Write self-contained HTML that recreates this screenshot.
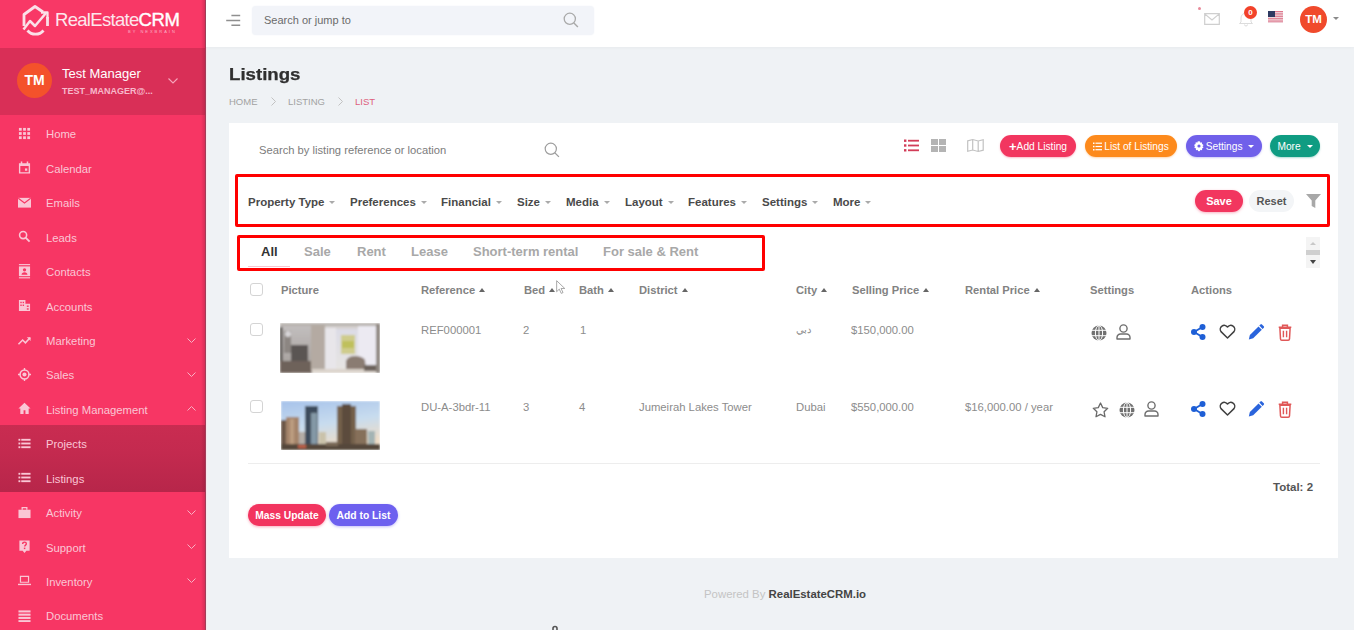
<!DOCTYPE html>
<html><head><meta charset="utf-8">
<style>
*{box-sizing:border-box;margin:0;padding:0}
html,body{width:1354px;height:630px;overflow:hidden;font-family:"Liberation Sans",sans-serif;background:#eff2f5;position:relative}
.a{position:absolute;white-space:nowrap}
svg{position:absolute;overflow:visible}
#sb{position:absolute;left:0;top:0;width:206px;height:630px;background:#f73664;border-right:1px solid #a0405a;box-shadow:1px 0 0 #fbe6ec}
#sb:after{content:"";position:absolute;left:201px;top:0;width:4px;height:630px;background:linear-gradient(90deg,rgba(120,20,50,0),rgba(120,20,50,.25))}
#sb .logo{position:absolute;left:0;top:0;width:205px;height:48px;background:#f83866}
#sb .user{position:absolute;left:0;top:48px;width:205px;height:67px;background:#d92f57}
#sb .sub{position:absolute;left:0;top:425px;width:205px;height:67px;background:linear-gradient(#c92c51,#c42a4f 40%,#b7264a)}
.mi{position:absolute;left:0;width:205px;height:20px;color:#fac6d5;font-size:11.3px;line-height:20px}
.mi .t{position:absolute;left:46px;top:0.5px}
.mi svg{left:18px;top:3px;width:13px;height:13px}
.mi .ch{position:absolute;left:187px;top:7px;width:9px;height:5px}
#hdr{position:absolute;left:206px;top:0;width:1148px;height:47px;background:#fff;box-shadow:0 1px 3px rgba(0,0,0,.03)}
#card{position:absolute;left:229px;top:123px;width:1109px;height:435px;background:#fff}
.btn{position:absolute;height:22px;border-radius:11px;color:#fff;font-size:10.2px;line-height:23.5px;text-align:center;font-weight:normal}
.flt{position:absolute;top:195px;font-size:11.5px;font-weight:bold;color:#4a4a4a;line-height:14px}
.car{display:inline-block;width:0;height:0;border-left:3.5px solid transparent;border-right:3.5px solid transparent;border-top:3.5px solid #aaa;margin-left:5px;vertical-align:2px}
.tab{position:absolute;top:244px;font-size:13px;font-weight:bold;color:#a8a8a8;line-height:15px}
.th{position:absolute;top:284px;font-size:11.2px;font-weight:bold;color:#828282;line-height:13px}
.up{display:inline-block;width:0;height:0;border-left:3.5px solid transparent;border-right:3.5px solid transparent;border-bottom:4px solid #666;margin-left:4px;vertical-align:2px}
.td{position:absolute;font-size:11.3px;color:#8c8c8c;line-height:13px}
.cb{position:absolute;width:13px;height:13px;border:1px solid #d4d4d4;border-radius:3px;background:#fff}
.box{position:absolute;border:3px solid #ff0000;border-radius:2px}
</style></head><body>
<!-- SIDEBAR -->
<div id="sb">
  <div class="logo"></div>
  <div class="user"></div>
  <div class="sub"></div>
  <svg style="left:21px;top:4px;width:29px;height:33px" viewBox="0 0 29 33" fill="none" stroke="#fbe0e8" stroke-width="2.8" stroke-linejoin="round">
    <path d="M3 22V10.5L14 2.5 22 8"/>
    <path d="M26.5 13v9"/>
    <path d="M6.5 26.5a10.5 10.5 0 0 0 16 0"/>
    <path d="M2.5 25.5l6.5-8.5 5 5 11-13" stroke-width="2.5"/>
    <path d="M20 8.5h6.5v6" stroke-width="2.3"/>
  </svg>
  <div class="a" style="left:55px;top:9px;font-size:18.5px;color:#fde6ec;line-height:22px;letter-spacing:-0.7px">RealEstate<span style="color:#fff;letter-spacing:-0.3px;-webkit-text-stroke:0.4px #fff">CRM</span></div>
  <div class="a" style="left:128px;top:29px;font-size:4px;color:#f8b5c6;line-height:5px;letter-spacing:2px">BY NEXBRAIN</div>

  <div class="a" style="left:17px;top:63px;width:35px;height:35px;border-radius:50%;background:#f4522b;color:#fff;font-weight:bold;font-size:14px;line-height:35px;text-align:center">TM</div>
  <div class="a" style="left:62px;top:66px;font-size:13px;color:#fff;line-height:15px">Test Manager</div>
  <div class="a" style="left:62px;top:86px;font-size:9px;font-weight:bold;color:#f7b9cb;line-height:10px">TEST_MANAGER@...</div>
  <svg style="left:168px;top:78px;width:10px;height:6px" viewBox="0 0 10 6"><path d="M0.5 0.5l4.5 4.5 4.5-4.5" stroke="#f6a5bb" stroke-width="1.1" fill="none"/></svg>
<div class="mi" style="top:123.9px"><svg viewBox="0 0 14 14" fill="currentColor"><rect x="1" y="1" width="3" height="3"/><rect x="5.5" y="1" width="3" height="3"/><rect x="10" y="1" width="3" height="3"/><rect x="1" y="5.5" width="3" height="3"/><rect x="5.5" y="5.5" width="3" height="3"/><rect x="10" y="5.5" width="3" height="3"/><rect x="1" y="10" width="3" height="3"/><rect x="5.5" y="10" width="3" height="3"/><rect x="10" y="10" width="3" height="3"/></svg><span class="t">Home</span></div>
<div class="mi" style="top:158.4px"><svg viewBox="0 0 14 14" fill="currentColor"><path d="M1 2.5h12v11H1z M2.5 5.5v6.5h9V5.5z" fill-rule="evenodd"/><rect x="3" y="0.5" width="1.6" height="3"/><rect x="9.4" y="0.5" width="1.6" height="3"/><rect x="7.5" y="8" width="2.5" height="2.5"/></svg><span class="t">Calendar</span></div>
<div class="mi" style="top:192.8px"><svg viewBox="0 0 14 14" fill="currentColor"><path d="M0 2h14v10.5H0z"/><path d="M0.3 2.5l6.7 5 6.7-5" stroke="#f73664" stroke-width="1.2" fill="none"/></svg><span class="t">Emails</span></div>
<div class="mi" style="top:227.2px"><svg viewBox="0 0 14 14" fill="currentColor"><circle cx="5.5" cy="5.5" r="3.8" stroke="currentColor" stroke-width="1.7" fill="none"/><path d="M8.2 8.2l4.3 4.3" stroke="currentColor" stroke-width="2"/></svg><span class="t">Leads</span></div>
<div class="mi" style="top:261.6px"><svg viewBox="0 0 14 14" fill="currentColor"><rect x="1" y="-1" width="12" height="1.2"/><path d="M1 1.5h12v10.5H1z"/><rect x="1" y="13.2" width="12" height="1.2"/><circle cx="7" cy="5.2" r="1.8" fill="#f73664"/><path d="M3.8 10.5c0-1.8 1.4-2.7 3.2-2.7s3.2.9 3.2 2.7z" fill="#f73664"/></svg><span class="t">Contacts</span></div>
<div class="mi" style="top:296.0px"><svg viewBox="0 0 14 14" fill="currentColor"><path d="M1 1h7v12H1z M8 5h5v8H8z"/><rect x="2.5" y="3" width="1.5" height="1.5" fill="#f73664"/><rect x="5" y="3" width="1.5" height="1.5" fill="#f73664"/><rect x="2.5" y="6" width="1.5" height="1.5" fill="#f73664"/><rect x="5" y="6" width="1.5" height="1.5" fill="#f73664"/><rect x="9.5" y="7" width="2" height="1.5" fill="#f73664"/><rect x="9.5" y="10" width="2" height="1.5" fill="#f73664"/></svg><span class="t">Accounts</span></div>
<div class="mi" style="top:330.5px"><svg viewBox="0 0 14 14" fill="currentColor"><path d="M0.5 11l4.5-4.5 3 3 5-5.5" stroke="currentColor" stroke-width="1.7" fill="none"/><path d="M9.5 3.5h4v4z"/></svg><span class="t">Marketing</span><svg class="ch" viewBox="0 0 9 5"><path d="M0.5 0.5l4 4 4-4" stroke="#f9b0c4" stroke-width="1" fill="none"/></svg></div>
<div class="mi" style="top:364.9px"><svg viewBox="0 0 14 14" fill="currentColor"><circle cx="7" cy="7" r="4.8" stroke="currentColor" stroke-width="1.6" fill="none"/><circle cx="7" cy="7" r="2.2"/><path d="M7 0v2.5M7 11.5V14M0 7h2.5M11.5 7H14" stroke="currentColor" stroke-width="1.5"/></svg><span class="t">Sales</span><svg class="ch" viewBox="0 0 9 5"><path d="M0.5 0.5l4 4 4-4" stroke="#f9b0c4" stroke-width="1" fill="none"/></svg></div>
<div class="mi" style="top:399.3px"><svg viewBox="0 0 14 14" fill="currentColor"><path d="M7 0.8L0.5 7h2v6h3.5V9h2v4h3.5V7h2z"/></svg><span class="t">Listing Management</span><svg class="ch" viewBox="0 0 9 5"><path d="M0.5 4.5l4-4 4 4" stroke="#f9b0c4" stroke-width="1" fill="none"/></svg></div>
<div class="mi" style="top:433.7px"><svg viewBox="0 0 14 14" fill="currentColor"><rect x="0.5" y="2" width="2" height="2"/><rect x="0.5" y="6" width="2" height="2"/><rect x="0.5" y="10" width="2" height="2"/><rect x="3.5" y="2" width="10" height="2"/><rect x="3.5" y="6" width="10" height="2"/><rect x="3.5" y="10" width="10" height="2"/></svg><span class="t">Projects</span></div>
<div class="mi" style="top:468.1px"><svg viewBox="0 0 14 14" fill="currentColor"><rect x="0.5" y="2" width="2" height="2"/><rect x="0.5" y="6" width="2" height="2"/><rect x="0.5" y="10" width="2" height="2"/><rect x="3.5" y="2" width="10" height="2"/><rect x="3.5" y="6" width="10" height="2"/><rect x="3.5" y="10" width="10" height="2"/></svg><span class="t">Listings</span></div>
<div class="mi" style="top:502.6px"><svg viewBox="0 0 14 14" fill="currentColor"><path d="M0.5 4h13v9h-13z"/><path d="M4.5 4V1.8h5V4" stroke="currentColor" stroke-width="1.4" fill="none"/></svg><span class="t">Activity</span><svg class="ch" viewBox="0 0 9 5"><path d="M0.5 0.5l4 4 4-4" stroke="#f9b0c4" stroke-width="1" fill="none"/></svg></div>
<div class="mi" style="top:537.0px"><svg viewBox="0 0 14 14" fill="currentColor"><path d="M1.5 0.5h11v11H9l-2 2.5-2-2.5H1.5z"/><path d="M5 4.3c0-1.3 1-2 2-2s2 .7 2 1.8c0 1.4-1.8 1.5-1.8 3" stroke="#f73664" stroke-width="1.5" fill="none"/><rect x="6.3" y="8.2" width="1.6" height="1.6" fill="#f73664"/></svg><span class="t">Support</span><svg class="ch" viewBox="0 0 9 5"><path d="M0.5 0.5l4 4 4-4" stroke="#f9b0c4" stroke-width="1" fill="none"/></svg></div>
<div class="mi" style="top:571.4px"><svg viewBox="0 0 14 14" fill="currentColor"><path d="M2 2h10v7.5H2z M3.3 3.3v5h7.4v-5z" fill-rule="evenodd"/><path d="M0 10.5h14v1.5H0z"/></svg><span class="t">Inventory</span><svg class="ch" viewBox="0 0 9 5"><path d="M0.5 0.5l4 4 4-4" stroke="#f9b0c4" stroke-width="1" fill="none"/></svg></div>
<div class="mi" style="top:605.8px"><svg viewBox="0 0 14 14" fill="currentColor"><rect x="0.5" y="1.5" width="13" height="2.2"/><rect x="0.5" y="5" width="13" height="2.2"/><rect x="0.5" y="8.5" width="13" height="2.2"/><rect x="0.5" y="12" width="13" height="2"/></svg><span class="t">Documents</span></div>
</div>
<!-- HEADER -->
<div id="hdr">
  <svg style="left:20px;top:14px;width:15px;height:13px" viewBox="0 0 15 13"><path d="M5.4 1.5h8.8M0.2 6.5h14M5.4 11.2h8.8" stroke="#8f8f8f" stroke-width="1.4"/></svg>
  <div class="a" style="left:46px;top:6px;width:342px;height:29px;background:#f2f4f9;border-radius:4px;box-shadow:0 0 2px #f2f4f9"></div>
  <div class="a" style="left:58px;top:13px;font-size:11px;color:#6b6b6b;line-height:14px">Search or jump to</div>
  <svg style="left:357px;top:12px;width:16px;height:16px" viewBox="0 0 16 16"><circle cx="6.8" cy="6.8" r="5.6" stroke="#a9a9a9" stroke-width="1.3" fill="none"/><path d="M10.9 10.9l4 4" stroke="#a9a9a9" stroke-width="1.4"/></svg>
  <div class="a" style="left:992px;top:7px;width:3px;height:3px;border-radius:50%;background:#e88a9a"></div>
  <svg style="left:998px;top:13px;width:16px;height:12px" viewBox="0 0 16 12"><path d="M0.7 0.7h14.6v10.6H0.7z M0.7 0.9l7.3 6 7.3-6" stroke="#cfcfcf" stroke-width="1.2" fill="none"/></svg>
  <svg style="left:1032px;top:12px;width:16px;height:14px" viewBox="0 0 16 14"><path d="M3 10V6a5 5 0 0 1 10 0v4l1.5 1.5h-13z M6.5 12.5a1.5 1.5 0 0 0 3 0" stroke="#dcdcdc" stroke-width="1" fill="none"/></svg>
  <div class="a" style="left:1038px;top:6px;width:13px;height:13px;border-radius:50%;background:#f2422a;color:#fff;font-size:8px;font-weight:bold;line-height:13px;text-align:center">0</div>
  <svg style="left:1062px;top:11px;width:15px;height:12px" viewBox="0 0 15 12"><rect width="15" height="12" fill="#f6f2f4"/><rect y="0.00" width="15" height="0.95" fill="#dc7086"/><rect y="1.72" width="15" height="0.95" fill="#dc7086"/><rect y="3.44" width="15" height="0.95" fill="#dc7086"/><rect y="5.16" width="15" height="0.95" fill="#dc7086"/><rect y="6.88" width="15" height="0.95" fill="#dc7086"/><rect y="8.60" width="15" height="0.95" fill="#dc7086"/><rect y="10.32" width="15" height="0.95" fill="#dc7086"/><rect width="7" height="6" fill="#2e3a62"/></svg>
  <div class="a" style="left:1094px;top:6px;width:27px;height:27px;border-radius:50%;background:#f04a2c;color:#fff;font-weight:bold;font-size:11.5px;line-height:27px;text-align:center">TM</div>
  <div class="a" style="left:1127px;top:17px;width:0;height:0;border-left:3px solid transparent;border-right:3px solid transparent;border-top:3.5px solid #8a8a8a"></div>
</div>
<!-- MAIN -->
<div class="a" style="left:229px;top:64px;font-size:16.5px;font-weight:bold;color:#2f2f2f;line-height:20px;transform:scaleX(1.13);transform-origin:0 0;-webkit-text-stroke:0.25px #2f2f2f">Listings</div>
<div class="a" style="left:229px;top:96px;font-size:9.5px;color:#a2a2a2;line-height:11px">HOME</div>
<svg style="left:271px;top:97px;width:5px;height:9px" viewBox="0 0 5 9"><path d="M0.5 0.5l4 4-4 4" stroke="#c2c2c2" stroke-width="1" fill="none"/></svg>
<div class="a" style="left:288px;top:96px;font-size:9.5px;color:#a2a2a2;line-height:11px">LISTING</div>
<svg style="left:338px;top:97px;width:5px;height:9px" viewBox="0 0 5 9"><path d="M0.5 0.5l4 4-4 4" stroke="#c2c2c2" stroke-width="1" fill="none"/></svg>
<div class="a" style="left:355px;top:96px;font-size:9.5px;color:#de5f7d;line-height:11px">LIST</div>
<div id="card"></div>
<!-- search row -->
<div class="a" style="left:259px;top:144px;font-size:11.2px;color:#7c7c7c;line-height:13px">Search by listing reference or location</div>
<svg style="left:544px;top:142px;width:16px;height:16px" viewBox="0 0 16 16"><circle cx="6.8" cy="6.8" r="5.6" stroke="#9d9d9d" stroke-width="1.2" fill="none"/><path d="M10.9 10.9l4 4" stroke="#9d9d9d" stroke-width="1.3"/></svg>
<!-- view icons -->
<svg style="left:904px;top:139px;width:15px;height:13px" viewBox="0 0 15 13" fill="#d23c58"><rect x="0" y="0.5" width="2.4" height="2.4"/><rect x="0" y="5.3" width="2.4" height="2.4"/><rect x="0" y="10.1" width="2.4" height="2.4"/><rect x="4" y="0.8" width="11" height="1.8"/><rect x="4" y="5.6" width="11" height="1.8"/><rect x="4" y="10.4" width="11" height="1.8"/></svg>
<svg style="left:931px;top:139px;width:15px;height:13px" viewBox="0 0 15 13" fill="#b4b4b4"><rect x="0" y="0" width="7" height="6"/><rect x="8" y="0" width="7" height="6"/><rect x="0" y="7" width="7" height="6"/><rect x="8" y="7" width="7" height="6"/></svg>
<svg style="left:967px;top:139px;width:17px;height:13px" viewBox="0 0 17 13"><path d="M0.7 1.8l5-1.3 5.5 1.5 5-1.3v10.5l-5 1.3-5.5-1.5-5 1.3z M5.7 0.5v10.7 M11.2 2v10.7" stroke="#c2c2c2" stroke-width="1.2" fill="none"/></svg>
<div class="btn" style="left:1000px;top:135px;width:76px;background:#f2365f;box-shadow:0 1px 2px rgba(242,54,95,.35)"><b style="font-size:13px;vertical-align:-1px">+</b>Add Listing</div>
<div class="btn" style="left:1085px;top:135px;width:92px;background:#fd8a1c;box-shadow:0 1px 2px rgba(253,138,28,.35)"><svg style="position:relative;display:inline-block;width:9px;height:9px;vertical-align:-1px;margin-right:2px" viewBox="0 0 9 9" fill="#fff"><rect x="0" y="0.5" width="1.5" height="1.5"/><rect x="0" y="3.8" width="1.5" height="1.5"/><rect x="0" y="7" width="1.5" height="1.5"/><rect x="2.5" y="0.6" width="6.5" height="1.2"/><rect x="2.5" y="3.9" width="6.5" height="1.2"/><rect x="2.5" y="7.1" width="6.5" height="1.2"/></svg>List of Listings</div>
<div class="btn" style="left:1186px;top:135px;width:76px;background:#7060ea;box-shadow:0 1px 2px rgba(112,96,234,.35)"><svg style="position:relative;display:inline-block;width:10px;height:10px;vertical-align:-1px;margin-right:2px" viewBox="0 0 10 10"><path d="M5 0.3l1 .2.3 1.3 1-.5.9.6-.3 1.2 1.2.4.3 1-1 .8 1 .8-.3 1-1.2.4.3 1.2-.9.6-1-.5-.3 1.3-1 .2-1-.2-.3-1.3-1 .5-.9-.6.3-1.2-1.2-.4L.2 6l1-.8-1-.8.3-1 1.2-.4-.3-1.2.9-.6 1 .5.3-1.3z" fill="#fff"/><circle cx="5" cy="5" r="1.6" fill="#7060ea"/></svg>Settings <span class="car" style="border-top-color:#fff;margin-left:3px"></span></div>
<div class="btn" style="left:1270px;top:135px;width:50px;background:#0f9c82;box-shadow:0 1px 2px rgba(15,156,130,.35)">More <span class="car" style="border-top-color:#fff;margin-left:3px"></span></div>
<!-- filter row -->
<div class="box" style="left:235px;top:174px;width:1095px;height:53px"></div>
<div class="flt" style="left:248px">Property Type<span class="car"></span></div>
<div class="flt" style="left:350px">Preferences<span class="car"></span></div>
<div class="flt" style="left:441px">Financial<span class="car"></span></div>
<div class="flt" style="left:517px">Size<span class="car"></span></div>
<div class="flt" style="left:566px">Media<span class="car"></span></div>
<div class="flt" style="left:625px">Layout<span class="car"></span></div>
<div class="flt" style="left:688px">Features<span class="car"></span></div>
<div class="flt" style="left:762px">Settings<span class="car"></span></div>
<div class="flt" style="left:833px">More<span class="car"></span></div>
<div class="btn" style="left:1195px;top:190px;width:48px;background:#f2365f;font-weight:bold;font-size:11px;box-shadow:0 1px 3px rgba(242,54,95,.4)">Save</div>
<div class="btn" style="left:1249px;top:190px;width:45px;background:#f3f5f7;color:#555;font-weight:bold;font-size:11px">Reset</div>
<svg style="left:1306px;top:194px;width:15px;height:14px" viewBox="0 0 15 14"><path d="M0 0h15L9.3 6.5V14L5.7 12V6.5z" fill="#a8a8a8"/></svg>
<!-- tabs -->
<div class="box" style="left:237px;top:235px;width:528px;height:36px"></div>
<div class="tab" style="left:261px;color:#333">All</div>
<div class="a" style="left:248px;top:266px;width:42px;height:1px;background:#f6c6d2"></div>
<div class="tab" style="left:304px">Sale</div>
<div class="tab" style="left:357px">Rent</div>
<div class="tab" style="left:411px">Lease</div>
<div class="tab" style="left:473px">Short-term rental</div>
<div class="tab" style="left:603px">For sale &amp; Rent</div>
<div class="a" style="left:1306px;top:237px;width:14px;height:31px;background:#f4f4f4"></div>
<div class="a" style="left:1310px;top:242px;width:0;height:0;border-left:3px solid transparent;border-right:3px solid transparent;border-bottom:3px solid #c8c8c8"></div>
<div class="a" style="left:1306px;top:250px;width:14px;height:5px;background:#cfcfcf"></div>
<div class="a" style="left:1309.5px;top:260px;width:0;height:0;border-left:3.5px solid transparent;border-right:3.5px solid transparent;border-top:4px solid #444"></div>

<!-- table header -->
<div class="cb" style="left:250px;top:283px"></div>
<div class="th" style="left:281px">Picture</div>
<div class="th" style="left:421px">Reference<span class="up"></span></div>
<div class="th" style="left:524px">Bed<span class="up"></span></div>
<div class="th" style="left:579px">Bath<span class="up"></span></div>
<div class="th" style="left:639px">District<span class="up"></span></div>
<div class="th" style="left:796px">City<span class="up"></span></div>
<div class="th" style="left:852px">Selling Price<span class="up"></span></div>
<div class="th" style="left:965px">Rental Price<span class="up"></span></div>
<div class="th" style="left:1090px">Settings</div>
<div class="th" style="left:1191px">Actions</div>
<svg style="left:556px;top:280px;width:9px;height:14px" viewBox="0 0 11 17"><path d="M0.8 0.8v13.5l3.2-3.2 2.4 5.2 2.2-1-2.4-5h4.5z" fill="#fff" stroke="#8a8a8a" stroke-width="0.9"/></svg>
<!-- row 1 -->
<div class="cb" style="left:250px;top:323px"></div>
<svg style="left:280px;top:323px;width:100px;height:50px" viewBox="0 0 100 50" preserveAspectRatio="none">
<defs><filter id="bl1" x="0" y="0" width="1" height="1"><feGaussianBlur stdDeviation="1"/></filter>
<linearGradient id="wl" x1="0" y1="0" x2="0" y2="1"><stop offset="0" stop-color="#c4c0c0"/><stop offset="1" stop-color="#a29c98"/></linearGradient>
<linearGradient id="win" x1="0" y1="0" x2="0" y2="1"><stop offset="0" stop-color="#dcdce6"/><stop offset="1" stop-color="#e6e4e2"/></linearGradient></defs>
<g filter="url(#bl1)">
<rect width="100" height="50" fill="#d6d2d0"/>
<rect x="0" y="0" width="31" height="50" fill="url(#wl)"/>
<rect x="0" y="0" width="100" height="3" fill="#b8b2ae"/>
<rect x="0" y="4" width="2.5" height="44" fill="#4e4844"/>
<rect x="4" y="8" width="7" height="22" fill="#8c8682"/>
<circle cx="8" cy="11" r="3" fill="#d8d6d8"/>
<rect x="11" y="22" width="17" height="17" fill="#5a5452"/>
<rect x="0" y="38" width="32" height="12" fill="#6e625a"/>
<rect x="31" y="2" width="14" height="46" fill="#b4aaa2"/>
<rect x="45" y="5" width="11" height="42" fill="#e8e6ea"/>
<rect x="56" y="6" width="22" height="40" fill="url(#win)"/>
<rect x="61" y="12" width="14" height="19" fill="#cfcc8c"/>
<rect x="62" y="18" width="12" height="7" fill="#bfc05c"/>
<rect x="78" y="3" width="18" height="44" fill="#eceaf2"/>
<rect x="96" y="1" width="4" height="49" fill="#8e8680"/>
<path d="M66 38q2-5 9-5q7 0 10 4l1 10h-20z" fill="#8a7c72"/>
<rect x="32" y="46" width="64" height="4" fill="#dcd4cc"/>
<rect x="84" y="42" width="12" height="6" fill="#6c625c"/>
</g></svg>
<div class="td" style="left:421px;top:324px">REF000001</div>
<div class="td" style="left:523px;top:324px">2</div>
<div class="td" style="left:580px;top:324px">1</div>
<div class="td" style="left:796px;top:323px;font-size:10px">&#1583;&#1576;&#1610;</div>
<div class="td" style="left:851px;top:324px">$150,000.00</div>
<svg style="left:1091px;top:325px;width:16px;height:16px" viewBox="0 0 16 16"><circle cx="8" cy="8" r="7.5" fill="#707070"/><path d="M0.5 5.3h15M0.5 10.7h15M8 0.5v15" stroke="#fff" stroke-width="1"/><ellipse cx="8" cy="8" rx="3.6" ry="7.5" stroke="#fff" stroke-width="1" fill="none"/></svg><svg style="left:1116px;top:324px;width:15px;height:16px" viewBox="0 0 15 16"><circle cx="7.5" cy="4.5" r="3.6" stroke="#6e6e6e" stroke-width="1.4" fill="none"/><path d="M1 15v-1.5a3.5 3.5 0 0 1 3.5-3.5h6a3.5 3.5 0 0 1 3.5 3.5V15z" stroke="#6e6e6e" stroke-width="1.4" fill="none" stroke-linejoin="round"/></svg><svg style="left:1191px;top:324px;width:15px;height:16px" viewBox="0 0 15 16" fill="#1e5fd6"><circle cx="11.5" cy="3" r="3"/><circle cx="3" cy="8" r="3"/><circle cx="11.5" cy="13" r="3"/><path d="M3 8L11.5 3M3 8l8.5 5" stroke="#1e5fd6" stroke-width="2"/></svg><svg style="left:1219px;top:325px;width:17px;height:14px" viewBox="0 0 17 14"><path d="M8.5 13L2 6.6A3.7 3.7 0 0 1 8.5 2a3.7 3.7 0 0 1 6.5 4.6z" stroke="#404040" stroke-width="1.5" fill="none" stroke-linejoin="round"/></svg><svg style="left:1248px;top:324px;width:17px;height:16px" viewBox="0 0 17 16"><path d="M0.8 15.4l1.1-4.4 8.6-8.6 3.3 3.3-8.6 8.6z" fill="#2a64dc"/><path d="M11.3 1.6l1.2-1.2a1 1 0 0 1 1.4 0l1.9 1.9a1 1 0 0 1 0 1.4l-1.2 1.2z" fill="#2a64dc"/></svg><svg style="left:1278px;top:324px;width:14px;height:17px" viewBox="0 0 14 17"><path d="M0.7 3.3h12.6M4.6 3.2V1.2h4.8v2" stroke="#e05858" stroke-width="1.5" fill="none"/><path d="M1.9 4.2h10.2l-.6 10.8a1.3 1.3 0 0 1-1.3 1.2H3.8a1.3 1.3 0 0 1-1.3-1.2z" stroke="#e05858" stroke-width="1.5" fill="none"/><path d="M5.4 6.8v6.5M8.6 6.8v6.5" stroke="#e05858" stroke-width="1.4"/></svg>
<!-- row 2 -->
<div class="cb" style="left:250px;top:400px"></div>
<svg style="left:281px;top:401px;width:99px;height:49px" viewBox="0 0 99 49" preserveAspectRatio="none">
<defs><filter id="bl2" x="0" y="0" width="1" height="1"><feGaussianBlur stdDeviation="0.9"/></filter>
<linearGradient id="sky" x1="0" y1="0" x2="0.3" y2="1"><stop offset="0" stop-color="#a6c2ea"/><stop offset="0.55" stop-color="#c8dcee"/><stop offset="1" stop-color="#eedcc6"/></linearGradient></defs>
<g filter="url(#bl2)">
<rect width="99" height="49" fill="url(#sky)"/>
<rect x="0" y="19" width="6" height="30" fill="#6c5646"/>
<rect x="5" y="16" width="13" height="33" fill="#a4846a"/>
<rect x="9" y="18" width="4" height="30" fill="#bc9c80"/>
<rect x="18" y="31" width="7" height="18" fill="#b4aca6"/>
<rect x="24" y="5" width="13" height="39" fill="#3e4c5c"/>
<rect x="30" y="12" width="6" height="32" fill="#8498a6"/>
<rect x="38" y="31" width="7" height="17" fill="#cac2aa"/>
<rect x="56" y="5" width="19" height="42" fill="#74604c"/>
<rect x="61" y="3" width="9" height="44" fill="#5c4c3e"/>
<rect x="74" y="28" width="12" height="20" fill="#86705a"/>
<rect x="87" y="30" width="7" height="19" fill="#a4b4b4"/>
<rect x="0" y="43" width="99" height="6" fill="#54463a"/>
<rect x="17" y="44" width="8" height="3" fill="#c06048"/>
<rect x="45" y="41" width="12" height="4" fill="#7a6a58"/>
</g></svg>
<div class="td" style="left:421px;top:401px">DU-A-3bdr-11</div>
<div class="td" style="left:523px;top:401px">3</div>
<div class="td" style="left:579px;top:401px">4</div>
<div class="td" style="left:639px;top:401px">Jumeirah Lakes Tower</div>
<div class="td" style="left:796px;top:401px">Dubai</div>
<div class="td" style="left:851px;top:401px">$550,000.00</div>
<div class="td" style="left:965px;top:401px">$16,000.00 / year</div>
<svg style="left:1092px;top:402px;width:17px;height:16px" viewBox="0 0 17 16"><path d="M8.5 1l2.2 4.6 5 .7-3.6 3.5.9 5-4.5-2.4-4.5 2.4.9-5L1.3 6.3l5-.7z" stroke="#6a6a6a" stroke-width="1.3" fill="none" stroke-linejoin="round"/></svg><svg style="left:1119px;top:402px;width:16px;height:16px" viewBox="0 0 16 16"><circle cx="8" cy="8" r="7.5" fill="#707070"/><path d="M0.5 5.3h15M0.5 10.7h15M8 0.5v15" stroke="#fff" stroke-width="1"/><ellipse cx="8" cy="8" rx="3.6" ry="7.5" stroke="#fff" stroke-width="1" fill="none"/></svg><svg style="left:1144px;top:401px;width:15px;height:16px" viewBox="0 0 15 16"><circle cx="7.5" cy="4.5" r="3.6" stroke="#6e6e6e" stroke-width="1.4" fill="none"/><path d="M1 15v-1.5a3.5 3.5 0 0 1 3.5-3.5h6a3.5 3.5 0 0 1 3.5 3.5V15z" stroke="#6e6e6e" stroke-width="1.4" fill="none" stroke-linejoin="round"/></svg><svg style="left:1191px;top:401px;width:15px;height:16px" viewBox="0 0 15 16" fill="#1e5fd6"><circle cx="11.5" cy="3" r="3"/><circle cx="3" cy="8" r="3"/><circle cx="11.5" cy="13" r="3"/><path d="M3 8L11.5 3M3 8l8.5 5" stroke="#1e5fd6" stroke-width="2"/></svg><svg style="left:1219px;top:402px;width:17px;height:14px" viewBox="0 0 17 14"><path d="M8.5 13L2 6.6A3.7 3.7 0 0 1 8.5 2a3.7 3.7 0 0 1 6.5 4.6z" stroke="#404040" stroke-width="1.5" fill="none" stroke-linejoin="round"/></svg><svg style="left:1248px;top:401px;width:17px;height:16px" viewBox="0 0 17 16"><path d="M0.8 15.4l1.1-4.4 8.6-8.6 3.3 3.3-8.6 8.6z" fill="#2a64dc"/><path d="M11.3 1.6l1.2-1.2a1 1 0 0 1 1.4 0l1.9 1.9a1 1 0 0 1 0 1.4l-1.2 1.2z" fill="#2a64dc"/></svg><svg style="left:1278px;top:401px;width:14px;height:17px" viewBox="0 0 14 17"><path d="M0.7 3.3h12.6M4.6 3.2V1.2h4.8v2" stroke="#e05858" stroke-width="1.5" fill="none"/><path d="M1.9 4.2h10.2l-.6 10.8a1.3 1.3 0 0 1-1.3 1.2H3.8a1.3 1.3 0 0 1-1.3-1.2z" stroke="#e05858" stroke-width="1.5" fill="none"/><path d="M5.4 6.8v6.5M8.6 6.8v6.5" stroke="#e05858" stroke-width="1.4"/></svg>
<div class="a" style="left:248px;top:463px;width:1072px;height:1px;background:#ededed"></div>
<div class="a" style="left:1273px;top:481px;font-size:11.5px;font-weight:bold;color:#555;line-height:13px">Total: 2</div>
<div class="btn" style="left:248px;top:504px;width:78px;background:#f2345f;font-weight:bold;font-size:10.3px;box-shadow:0 1px 3px rgba(242,52,95,.4)">Mass Update</div>
<div class="btn" style="left:329px;top:504px;width:69px;background:#6d60ef;font-weight:bold;font-size:10.3px;box-shadow:0 1px 3px rgba(109,96,239,.4)">Add to List</div>
<div class="a" style="left:704px;top:588px;font-size:11.4px;color:#c4c4c4;line-height:12px">Powered By <b style="color:#444">RealEstateCRM.io</b></div>
<svg style="left:552px;top:626px;width:6px;height:5px" viewBox="0 0 6 5"><path d="M1 5V2.5a2 2 0 0 1 4 0V5" stroke="#555" stroke-width="1.6" fill="none"/></svg>
</body></html>
